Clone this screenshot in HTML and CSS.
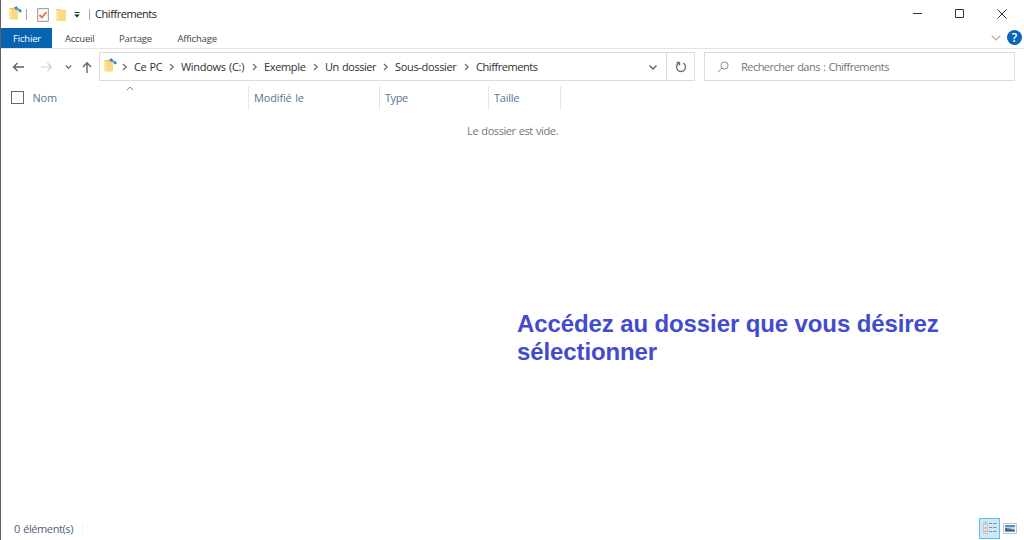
FILE: index.html
```
<!DOCTYPE html>
<html lang="fr">
<head>
<meta charset="utf-8">
<title>Chiffrements</title>
<link rel="stylesheet" href="styles.css">
</head>
<body>
<svg class="defs" width="0" height="0">
  <symbol id="folder" viewBox="0 0 12 14">
    <path d="M1 1h4l1 1h5v11H1z" fill="#f0cb6b"/>
    <path d="M3.500 2.500H11V13H3z" fill="#fadb82"/>
    <path d="M1 1l2.500 1.500V13.500L1 12.500z" fill="#fde8a8"/>
  </symbol>
  <symbol id="pinned" viewBox="0 0 14 16">
    <path d="M1 3h8.500v11H1z" fill="#efc45c"/>
    <path d="M3.500 4.500H10V14.500H3z" fill="#fad980"/>
    <path d="M1 3l2.500 1.500V15L1 14z" fill="#fde6a0"/>
    <path d="M6 2.500l2.500-1.300L10.500 3.500 8 5zM10 4.500l2.200-.8L14 6.500l-2.500 1z" fill="#2e82cd"/>
    <path d="M8.500 3l3 2.500" stroke="#5aa2df" stroke-width="2"/>
  </symbol>
  <symbol id="sep" viewBox="0 0 6 8"><path d="M1 1l3.200 3L1 7" fill="none" stroke="#6b6b6b" stroke-width="1.200"/></symbol>
</svg>
<div class="window">
  <header class="titlebar">
    <svg class="app-icon" viewBox="0 0 14 16"><use href="#pinned"/></svg>
    <i class="rule"></i>
    <svg class="check-icon" viewBox="0 0 12 14"><path d="M.6.6h10.800v12.800H.6z" fill="#faf8f7" stroke="#9b9b9b"/><path d="M2.500 7l2.500 2.500L9.500 4" fill="none" stroke="#e8733f" stroke-width="1.800"/></svg>
    <svg class="folder-icon" viewBox="0 0 12 14"><use href="#folder"/></svg>
    <svg class="more-icon" viewBox="0 0 6 6"><path d="M.5.5h5" stroke="#333"/><path d="M.3 2.500h5.400L3 5.500z" fill="#222"/></svg>
    <i class="rule second"></i>
    <span class="title">Chiffrements</span>
    <svg class="controls" viewBox="0 0 96 12" fill="none" stroke="#333"><path d="M1 5.500h9M85.500 1.500l9 9M94.500 1.500l-9 9"/><path d="M43.500 1.500h8v8h-8z"/></svg>
  </header>
  <nav class="tabs">
    <span class="tab file">Fichier</span>
    <span class="tab home">Accueil</span>
    <span class="tab share">Partage</span>
    <span class="tab view">Affichage</span>
    <svg class="expand" viewBox="0 0 10 6"><path d="M.7.7L5 5 9.300.7" fill="none" stroke="#aaa" stroke-width="1.100"/></svg>
    <span class="help">?</span>
  </nav>
  <div class="navigation">
    <svg class="arrows" viewBox="0 0 84 14" fill="none">
      <path d="M12 7H1.500M5.500 3L1.500 7l4 4" stroke="#626262" stroke-width="1.300"/>
      <path d="M29 7h10.500M35.500 3l4 4-4 4" stroke="#d0d0d0" stroke-width="1.200"/>
      <path d="M53.800 5.500l2.700 2.800 2.700-2.800" stroke="#777" stroke-width="1.400"/>
      <path d="M75 13V3M71 7l4-4.300L79 7" stroke="#666" stroke-width="1.400"/>
    </svg>
    <div class="address">
      <svg class="path-icon" viewBox="0 0 14 16"><use href="#pinned"/></svg>
      <svg class="sep"><use href="#sep"/></svg><span class="crumb pc">Ce PC</span>
      <svg class="sep"><use href="#sep"/></svg><span class="crumb drive">Windows (C:)</span>
      <svg class="sep"><use href="#sep"/></svg><span class="crumb example">Exemple</span>
      <svg class="sep"><use href="#sep"/></svg><span class="crumb parent">Un dossier</span>
      <svg class="sep"><use href="#sep"/></svg><span class="crumb child">Sous-dossier</span>
      <svg class="sep"><use href="#sep"/></svg><span class="crumb current">Chiffrements</span>
      <svg class="history" viewBox="0 0 10 7"><path d="M1.500 1.500L5 5l3.500-3.500" fill="none" stroke="#666" stroke-width="1.500"/></svg>
      <span class="refresh"><svg viewBox="0 0 12 12" width="12" height="12"><path d="M8.300 2.100a4.500 4.500 0 1 1-4.700.1M1.500 1.500h3v3" fill="none" stroke="#717171" stroke-width="1.400"/></svg></span>
    </div>
    <div class="search">
      <svg width="12" height="12" viewBox="0 0 12 12" fill="none" stroke="#8b8b8b"><circle cx="7.500" cy="4.500" r="3.600"/><path d="M5 7L.8 11.200"/></svg>
      <span class="hint">Rechercher dans : Chiffrements</span>
    </div>
  </div>
  <div class="columns">
    <div class="column name"><i class="checkbox"></i><span class="label-name">Nom</span><svg class="sort" viewBox="0 0 8 5"><path d="M.8 4.200L4 1l3.200 3.200" fill="none" stroke="#888"/></svg></div>
    <div class="column modified"><span>Modifié le</span></div>
    <div class="column type"><span>Type</span></div>
    <div class="column size"><span>Taille</span></div>
  </div>
  <main class="content">
    <p class="empty"><span>Le dossier est vide.</span></p>
    <p class="instruction">Accédez au dossier que vous désirez sélectionner</p>
  </main>
  <footer class="status">
    <span class="count">0 élément(s)</span>
    <i class="status-rule"></i>
    <span class="details-view"><svg width="14" height="14" viewBox="0 0 14 14"><path d="M.5 1.500h4v11h-4z" fill="#eee8e4" stroke="#b6bdc1" stroke-width=".7"/><path d="M1.500 3h2" stroke="#648fb2"/><path d="M1.500 7h2M1.500 10.500h2" stroke="#d99078" stroke-width="1.500"/><path d="M6 2.500h3M10 2.500h3.500M6 6.500h3M10 6.500h3.500M6 10.500h3M10 10.500h3.500" stroke="#7895a5"/></svg></span>
    <svg class="thumbs" viewBox="0 0 14 11"><path d="M.5.5h13v10H.5z" fill="#fff" stroke="#c4c4c4"/><path d="M2 2h10v7H2z" fill="#b9d5eb"/><path d="M2 2h10v2H2z" fill="#4a8fd0"/><path d="M2 5l4 .5 6 1.500v1.500H2z" fill="#4d6570"/></svg>
  </footer>
</div>
</body>
</html>
```
FILE: styles.css
```
* { box-sizing: border-box; }
body { margin: 0; background: #fff; font-family: "Open Sans", "Noto Sans", sans-serif; font-size: 11px; word-spacing: .8px; line-height: 16px; color: #303030; }
svg { display: block; flex: none; }
.defs { position: absolute; }
span { white-space: nowrap; }
.window { width: 1024px; height: 540px; border-left: 1px solid #606060; display: flex; flex-direction: column; overflow: hidden; }
.titlebar { height: 28px; display: flex; align-items: center; padding-left: 7px; flex: none; }
.app-icon { width: 14px; height: 16px; margin-top: -2px; }
.rule { width: 1px; height: 11px; background: #aaa; margin-left: 4px; }
.check-icon { width: 12px; height: 14px; margin: 1px 0 0 10px; }
.folder-icon { width: 12px; height: 14px; margin: 1px 0 0 6px; }
.more-icon { width: 6px; height: 6px; margin: 2px 0 0 7px; }
.second { margin-left: 9px; }
.title { margin-left: 5px; width: 70px; letter-spacing: -.43px; color: #222; }
.controls { width: 96px; height: 12px; margin: 0 16px 0 auto; }
.tabs { height: 21px; display: flex; border-bottom: 1px solid #e3e3e3; font-size: 9.5px; letter-spacing: -.18px; line-height: 21px; flex: none; }
.tab { flex: none; color: #444; }
.file { width: 51px; background: #0563b1; color: #fff; padding-left: 12px; }
.home { width: 54px; padding-left: 13px; letter-spacing: -.25px; }
.share { width: 59px; padding-left: 13px; letter-spacing: -.15px; }
.view { width: 60px; padding-left: 12.5px; }
.expand { width: 10px; height: 6px; margin: 7px 6px 0 auto; }
.help { width: 15px; height: 15px; margin: 2px 2px 0 0; background: #0867b8; color: #fff; border-radius: 50%; text-align: center; line-height: 15px; font-size: 12px; letter-spacing: 0; font-weight: 600; }
.navigation { height: 36px; padding-top: 3px; display: flex; flex: none; }
.arrows { width: 84px; height: 14px; margin: 8px 3px 0 11px; }
.address { width: 596px; height: 29px; border: 1px solid #dcdcdc; display: flex; align-items: center; }
.path-icon { width: 14px; height: 16px; margin: -3px 5px 0 3px; }
.sep { width: 6px; height: 8px; margin-right: 6px; }
.crumb { flex: none; }
.pc { width: 35px; letter-spacing: -.4px; }
.drive { width: 71px; letter-spacing: -.3px; }
.example { width: 49px; letter-spacing: -.35px; }
.parent { width: 58px; letter-spacing: -.47px; }
.child { width: 69px; letter-spacing: -.33px; }
.current { width: 64px; letter-spacing: -.43px; }
.history { width: 10px; height: 7px; margin: 1px 8px 0 auto; }
.refresh { width: 28px; height: 27px; border-left: 1px solid #dcdcdc; display: flex; align-items: center; justify-content: center; }
.search { width: 311px; height: 29px; border: 1px solid #dcdcdc; margin-left: 9px; display: flex; align-items: center; padding-left: 12px; }
.hint { margin-left: 12px; color: #757575; letter-spacing: -.53px; }
.columns { height: 25px; margin-top: 1px; display: flex; color: #60758e; line-height: 23px; flex: none; }
.column { height: 24px; border-right: 1px solid #e6e6e6; padding-left: 5px; flex: none; }
.name { width: 248px; display: flex; padding-left: 10px; }
.checkbox { width: 13px; height: 13px; border: 1px solid #666; margin-top: 5px; }
.label-name { margin-left: 8.5px; width: 93.5px; letter-spacing: -.25px; }
.sort { width: 8px; height: 5px; }
.modified { width: 131px; letter-spacing: -.15px; }
.type { width: 109px; letter-spacing: -.45px; }
.size { width: 72px; letter-spacing: -.25px; }
.content { flex: 1; min-height: 0; }
.empty { margin: 12px 0 0; text-align: center; color: #777; }
.empty span { letter-spacing: -.44px; }
.instruction { margin: 171px 0 0 516px; width: 450px; font: bold 24px/28px "Liberation Sans", Arial, sans-serif; letter-spacing: -.11px; word-spacing: 0; color: #424bcf; }
.status { height: 24px; display: flex; align-items: center; padding-left: 13px; flex: none; color: #4e6378; }
.count { width: 68px; letter-spacing: -.4px; padding-top: 1px; }
.status-rule { width: 1px; height: 9px; background: #f0f0f0; }
.details-view { width: 21px; height: 21px; margin: 0 3px 0 auto; background: #cce8f6; border: 1px solid #66bce8; display: flex; align-items: center; justify-content: center; }
.thumbs { width: 14px; height: 11px; margin-right: 7px; }
```
